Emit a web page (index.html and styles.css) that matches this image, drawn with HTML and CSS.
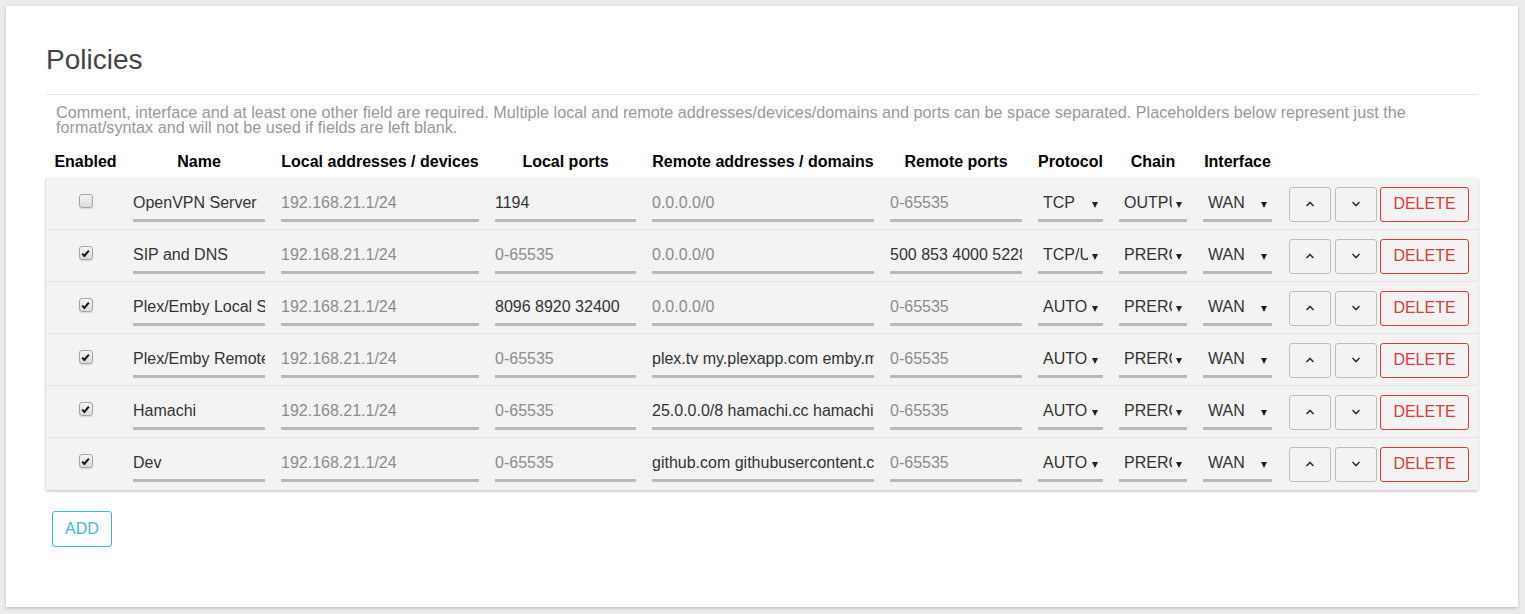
FILE: index.html
```html
<!DOCTYPE html>
<html>
<head>
<meta charset="utf-8">
<title>Policies</title>
<link rel="stylesheet" href="styles.css">
</head>
<body>
<div class="page">
  <div class="card">
    <h2 class="title">Policies</h2>
    <div class="rule"></div>
    <p class="desc">Comment, interface and at least one other field are required. Multiple local and remote addresses/devices/domains and ports can be space separated. Placeholders below represent just the format/syntax and will not be used if fields are left blank.</p>

    <div class="grid head">
      <div class="th">Enabled</div>
      <div class="th">Name</div>
      <div class="th">Local addresses / devices</div>
      <div class="th">Local ports</div>
      <div class="th">Remote addresses / domains</div>
      <div class="th">Remote ports</div>
      <div class="th">Protocol</div>
      <div class="th">Chain</div>
      <div class="th">Interface</div>
      <div class="th"></div>
    </div>

    <div class="table">
      <div class="grid row">
        <div class="cell check"><span class="cb"></span></div>
        <div class="cell"><input class="field" value="OpenVPN Server"></div>
        <div class="cell"><input class="field" placeholder="192.168.21.1/24"></div>
        <div class="cell"><input class="field" value="1194"></div>
        <div class="cell"><input class="field" placeholder="0.0.0.0/0"></div>
        <div class="cell"><input class="field" placeholder="0-65535"></div>
        <div class="cell"><div class="select"><span class="val">TCP</span><span class="caret"></span></div></div>
        <div class="cell"><div class="select"><span class="val">OUTPUT</span><span class="caret"></span></div></div>
        <div class="cell"><div class="select"><span class="val">WAN</span><span class="caret"></span></div></div>
        <div class="cell actions">
          <button class="btn icon"><svg width="10" height="6" viewBox="0 0 10 6"><polyline points="1.5,5 5,1.5 8.5,5" fill="none" stroke="#333" stroke-width="1.6"/></svg></button>
          <button class="btn icon down"><svg width="10" height="6" viewBox="0 0 10 6"><polyline points="1.5,1 5,4.5 8.5,1" fill="none" stroke="#333" stroke-width="1.6"/></svg></button>
          <button class="btn danger">DELETE</button>
        </div>
      </div>

      <div class="grid row">
        <div class="cell check"><span class="cb on"><svg width="11" height="11" viewBox="0 0 11 11"><path d="M2.2 5.6 L4.4 7.9 L8.8 2.6" fill="none" stroke="#111" stroke-width="2"/></svg></span></div>
        <div class="cell"><input class="field" value="SIP and DNS"></div>
        <div class="cell"><input class="field" placeholder="192.168.21.1/24"></div>
        <div class="cell"><input class="field" placeholder="0-65535"></div>
        <div class="cell"><input class="field" placeholder="0.0.0.0/0"></div>
        <div class="cell"><input class="field" value="500 853 4000 5228"></div>
        <div class="cell"><div class="select"><span class="val">TCP/UDP</span><span class="caret"></span></div></div>
        <div class="cell"><div class="select"><span class="val">PREROUTING</span><span class="caret"></span></div></div>
        <div class="cell"><div class="select"><span class="val">WAN</span><span class="caret"></span></div></div>
        <div class="cell actions">
          <button class="btn icon"><svg width="10" height="6" viewBox="0 0 10 6"><polyline points="1.5,5 5,1.5 8.5,5" fill="none" stroke="#333" stroke-width="1.6"/></svg></button>
          <button class="btn icon down"><svg width="10" height="6" viewBox="0 0 10 6"><polyline points="1.5,1 5,4.5 8.5,1" fill="none" stroke="#333" stroke-width="1.6"/></svg></button>
          <button class="btn danger">DELETE</button>
        </div>
      </div>

      <div class="grid row">
        <div class="cell check"><span class="cb on"><svg width="11" height="11" viewBox="0 0 11 11"><path d="M2.2 5.6 L4.4 7.9 L8.8 2.6" fill="none" stroke="#111" stroke-width="2"/></svg></span></div>
        <div class="cell"><input class="field" value="Plex/Emby Local Server"></div>
        <div class="cell"><input class="field" placeholder="192.168.21.1/24"></div>
        <div class="cell"><input class="field" value="8096 8920 32400"></div>
        <div class="cell"><input class="field" placeholder="0.0.0.0/0"></div>
        <div class="cell"><input class="field" placeholder="0-65535"></div>
        <div class="cell"><div class="select"><span class="val">AUTO</span><span class="caret"></span></div></div>
        <div class="cell"><div class="select"><span class="val">PREROUTING</span><span class="caret"></span></div></div>
        <div class="cell"><div class="select"><span class="val">WAN</span><span class="caret"></span></div></div>
        <div class="cell actions">
          <button class="btn icon"><svg width="10" height="6" viewBox="0 0 10 6"><polyline points="1.5,5 5,1.5 8.5,5" fill="none" stroke="#333" stroke-width="1.6"/></svg></button>
          <button class="btn icon down"><svg width="10" height="6" viewBox="0 0 10 6"><polyline points="1.5,1 5,4.5 8.5,1" fill="none" stroke="#333" stroke-width="1.6"/></svg></button>
          <button class="btn danger">DELETE</button>
        </div>
      </div>

      <div class="grid row">
        <div class="cell check"><span class="cb on"><svg width="11" height="11" viewBox="0 0 11 11"><path d="M2.2 5.6 L4.4 7.9 L8.8 2.6" fill="none" stroke="#111" stroke-width="2"/></svg></span></div>
        <div class="cell"><input class="field" value="Plex/Emby Remote Servers"></div>
        <div class="cell"><input class="field" placeholder="192.168.21.1/24"></div>
        <div class="cell"><input class="field" placeholder="0-65535"></div>
        <div class="cell"><input class="field" value="plex.tv my.plexapp.com emby.media"></div>
        <div class="cell"><input class="field" placeholder="0-65535"></div>
        <div class="cell"><div class="select"><span class="val">AUTO</span><span class="caret"></span></div></div>
        <div class="cell"><div class="select"><span class="val">PREROUTING</span><span class="caret"></span></div></div>
        <div class="cell"><div class="select"><span class="val">WAN</span><span class="caret"></span></div></div>
        <div class="cell actions">
          <button class="btn icon"><svg width="10" height="6" viewBox="0 0 10 6"><polyline points="1.5,5 5,1.5 8.5,5" fill="none" stroke="#333" stroke-width="1.6"/></svg></button>
          <button class="btn icon down"><svg width="10" height="6" viewBox="0 0 10 6"><polyline points="1.5,1 5,4.5 8.5,1" fill="none" stroke="#333" stroke-width="1.6"/></svg></button>
          <button class="btn danger">DELETE</button>
        </div>
      </div>

      <div class="grid row">
        <div class="cell check"><span class="cb on"><svg width="11" height="11" viewBox="0 0 11 11"><path d="M2.2 5.6 L4.4 7.9 L8.8 2.6" fill="none" stroke="#111" stroke-width="2"/></svg></span></div>
        <div class="cell"><input class="field" value="Hamachi"></div>
        <div class="cell"><input class="field" placeholder="192.168.21.1/24"></div>
        <div class="cell"><input class="field" placeholder="0-65535"></div>
        <div class="cell"><input class="field" value="25.0.0.0/8 hamachi.cc hamachi.com logmein.com"></div>
        <div class="cell"><input class="field" placeholder="0-65535"></div>
        <div class="cell"><div class="select"><span class="val">AUTO</span><span class="caret"></span></div></div>
        <div class="cell"><div class="select"><span class="val">PREROUTING</span><span class="caret"></span></div></div>
        <div class="cell"><div class="select"><span class="val">WAN</span><span class="caret"></span></div></div>
        <div class="cell actions">
          <button class="btn icon"><svg width="10" height="6" viewBox="0 0 10 6"><polyline points="1.5,5 5,1.5 8.5,5" fill="none" stroke="#333" stroke-width="1.6"/></svg></button>
          <button class="btn icon down"><svg width="10" height="6" viewBox="0 0 10 6"><polyline points="1.5,1 5,4.5 8.5,1" fill="none" stroke="#333" stroke-width="1.6"/></svg></button>
          <button class="btn danger">DELETE</button>
        </div>
      </div>

      <div class="grid row">
        <div class="cell check"><span class="cb on"><svg width="11" height="11" viewBox="0 0 11 11"><path d="M2.2 5.6 L4.4 7.9 L8.8 2.6" fill="none" stroke="#111" stroke-width="2"/></svg></span></div>
        <div class="cell"><input class="field" value="Dev"></div>
        <div class="cell"><input class="field" placeholder="192.168.21.1/24"></div>
        <div class="cell"><input class="field" placeholder="0-65535"></div>
        <div class="cell"><input class="field" value="github.com githubusercontent.com"></div>
        <div class="cell"><input class="field" placeholder="0-65535"></div>
        <div class="cell"><div class="select"><span class="val">AUTO</span><span class="caret"></span></div></div>
        <div class="cell"><div class="select"><span class="val">PREROUTING</span><span class="caret"></span></div></div>
        <div class="cell"><div class="select"><span class="val">WAN</span><span class="caret"></span></div></div>
        <div class="cell actions">
          <button class="btn icon"><svg width="10" height="6" viewBox="0 0 10 6"><polyline points="1.5,5 5,1.5 8.5,5" fill="none" stroke="#333" stroke-width="1.6"/></svg></button>
          <button class="btn icon down"><svg width="10" height="6" viewBox="0 0 10 6"><polyline points="1.5,1 5,4.5 8.5,1" fill="none" stroke="#333" stroke-width="1.6"/></svg></button>
          <button class="btn danger">DELETE</button>
        </div>
      </div>
    </div>

    <button class="btn add">ADD</button>
  </div>
</div>
</body>
</html>
```

FILE: styles.css
```css
* { box-sizing: border-box; }

body {
  margin: 0;
  background: #ececec;
  font-family: "Liberation Sans", Arial, sans-serif;
  font-size: 16px;
  color: #333;
}

.page {
  padding: 6px 7px 7px 6px;
}

.card {
  width: 1512px;
  background: #fff;
  box-shadow: 0 1px 3px rgba(0, 0, 0, 0.22);
  padding: 38px 40px 60px 40px;
}

.title {
  margin: 0;
  font-size: 28px;
  line-height: 32px;
  font-weight: normal;
  color: #444;
}

.rule {
  margin-top: 18px;
  height: 1px;
  background: #e8e8e8;
}

.desc {
  margin: 10px 0 0 0;
  padding: 0 10px;
  font-size: 16.2px;
  line-height: 15px;
  color: #999;
}

.grid {
  display: grid;
  grid-template-columns: 79px 148px 214px 157px 238px 148px 81px 84px 85px 198px;
}

.head {
  margin-top: 18px;
  padding-bottom: 7px;
  line-height: 18px;
}

.th {
  font-weight: bold;
  color: #000;
  text-align: center;
  white-space: nowrap;
}

.table {
  background: #f3f3f3;
  box-shadow: 0 1px 3px rgba(0, 0, 0, 0.28);
}

.row {
  padding: 8px 0 7px 0;
  border-bottom: 1px solid #e3e3e3;
}

.row:last-child {
  padding-bottom: 8px;
  border-bottom: none;
}

.cell {
  padding: 0 8px;
  display: flex;
  align-items: center;
  min-width: 0;
}

.check {
  justify-content: center;
  padding-bottom: 6px;
}

.cb {
  width: 14px;
  height: 14px;
  border: 1px solid #a5a5a5;
  border-radius: 3px;
  background: linear-gradient(#f4f4f4, #dcdcdc);
  box-shadow: 0 1px 1px rgba(0, 0, 0, 0.12);
  display: flex;
  align-items: center;
  justify-content: center;
}

.field {
  width: 100%;
  height: 36px;
  border: none;
  border-bottom: 3px solid #b9b9b9;
  background: transparent;
  padding: 0;
  margin: 0;
  font: inherit;
  color: #333;
  outline: none;
}

.field::placeholder {
  color: #8c8c8c;
  opacity: 1;
}

.select {
  width: 100%;
  height: 36px;
  border-bottom: 3px solid #b9b9b9;
  display: flex;
  align-items: center;
  padding: 0 5px;
  color: #333;
}

.val {
  flex: 1;
  min-width: 0;
  overflow: hidden;
  white-space: nowrap;
}

.caret {
  flex: none;
  width: 0;
  height: 0;
  margin-left: 4px;
  margin-top: 5px;
  border-left: 3.5px solid transparent;
  border-right: 3.5px solid transparent;
  border-top: 6px solid #222;
}

.actions {
  padding: 0 9px;
}

.btn {
  font: inherit;
  height: 35px;
  border-radius: 3px;
  background: transparent;
  cursor: pointer;
  margin: 0;
}

.icon {
  width: 42px;
  border: 1px solid #bdbdbd;
  display: flex;
  align-items: center;
  justify-content: center;
  padding: 0;
}

.icon.down {
  margin-left: 4px;
}

.danger {
  width: 89px;
  margin-left: 3px;
  border: 1px solid #d93a3a;
  color: #d93a3a;
  padding: 0;
}

.add {
  display: block;
  margin: 21px 0 0 6px;
  width: 60px;
  height: 36px;
  border: 1px solid #3db7dc;
  color: #3db7dc;
  padding: 0;
}
```
